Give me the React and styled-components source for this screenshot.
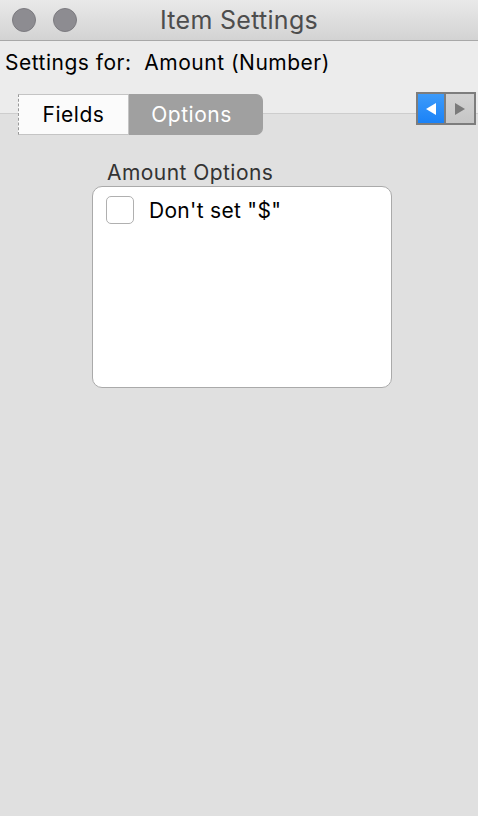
import React from "react";
import styled, { createGlobalStyle } from "styled-components";

const GlobalStyle = createGlobalStyle`
  html, body {
    margin: 0;
    padding: 0;
    background: #e0e0e0;
  }
  body {
    font-family: Inter, "Noto Sans", sans-serif;
  }
`;

const Window = styled.div`
  width: 478px;
  height: 816px;
  display: flex;
  flex-direction: column;
  background: #ececec;
  overflow: hidden;
`;

const TitleBar = styled.div`
  height: 40px;
  flex-shrink: 0;
  display: flex;
  align-items: center;
  position: relative;
  background: linear-gradient(#e9e9e9, #d3d3d3);
  border-bottom: 1px solid #a8a8a8;
`;

const Lights = styled.div`
  display: flex;
  gap: 17px;
  padding-left: 12px;
`;

const Light = styled.span`
  width: 22px;
  height: 22px;
  border-radius: 50%;
  background: #8d8c91;
  border: 1px solid #7c7b80;
`;

const Title = styled.div`
  position: absolute;
  left: 0;
  right: 0;
  text-align: center;
  font-size: 25px;
  letter-spacing: 0.3px;
  color: #4d4d4d;
  pointer-events: none;
`;

const InfoRow = styled.div`
  padding: 9px 0 0 5px;
  height: 51px;
  box-sizing: border-box;
  font-size: 21px;
  letter-spacing: 0.5px;
  color: #000;
  white-space: pre;
`;

const TabStrip = styled.div`
  height: 43px;
  display: flex;
  align-items: flex-start;
  background: linear-gradient(
    #ececec 0,
    #ececec 21px,
    #cdcdcd 21px,
    #cdcdcd 22px,
    #e0e0e0 22px
  );
`;

const Tabs = styled.div`
  display: flex;
  margin: 2px 0 0 18px;
  height: 41px;
`;

const Tab = styled.div`
  display: flex;
  align-items: center;
  justify-content: center;
  box-sizing: border-box;
  font-size: 21px;
  letter-spacing: 0.5px;
  width: ${(p) => p.$w}px;
  padding-right: ${(p) => (p.$active ? 8 : 0)}px;
  color: ${(p) => (p.$active ? "#fff" : "#000")};
  background: ${(p) => (p.$active ? "#a0a0a0" : "#fbfbfb")};
  border: 1px solid ${(p) => (p.$active ? "#a0a0a0" : "#c4c4c4")};
  border-left: ${(p) => (p.$active ? "none" : "1px dashed #999")};
  border-radius: ${(p) => (p.$active ? "0 7px 7px 0" : "0")};
`;

const Arrows = styled.div`
  display: flex;
  margin: 0 2px 0 auto;
`;

const ArrowButton = styled.div`
  width: 30px;
  height: 33px;
  box-sizing: border-box;
  display: flex;
  align-items: center;
  justify-content: center;
  border: 2px solid #7d7d7d;
  border-left-width: ${(p) => (p.$first ? 2 : 0)}px;
  background: ${(p) =>
    p.$on ? "linear-gradient(#3d9bfa, #1a82f7)" : "linear-gradient(#d2d2d2, #c6c6c6)"};
`;

const Panel = styled.div`
  flex: 1;
  background: #e0e0e0;
  display: flex;
  flex-direction: column;
  align-items: flex-start;
  padding: 24px 0 0 92px;
`;

const GroupLabel = styled.div`
  font-size: 21px;
  letter-spacing: 0.45px;
  color: #333;
  margin-left: 15px;
  height: 27px;
  line-height: 28px;
`;

const GroupBox = styled.div`
  width: 300px;
  height: 202px;
  box-sizing: border-box;
  background: #fff;
  border: 1px solid #aaaaaa;
  border-radius: 10px;
  padding: 9px 0 0 13px;
`;

const CheckRow = styled.label`
  display: flex;
  align-items: center;
  gap: 15px;
  font-size: 21px;
  letter-spacing: 0.3px;
  color: #000;
`;

const CheckBox = styled.span`
  width: 28px;
  height: 28px;
  box-sizing: border-box;
  border: 1px solid #b0b0b0;
  border-radius: 5px;
  background: #fff;
`;

const Triangle = ({ dir, color }) => (
  <svg width="12" height="14" viewBox="0 0 12 14">
    {dir === "left" ? (
      <polygon points="11,1 11,13 1,7" fill={color} />
    ) : (
      <polygon points="1,1 1,13 11,7" fill={color} />
    )}
  </svg>
);

export default function App() {
  return (
    <>
      <GlobalStyle />
      <Window>
        <TitleBar>
          <Lights>
            <Light />
            <Light />
          </Lights>
          <Title>Item Settings</Title>
        </TitleBar>
        <InfoRow>{"Settings for:  Amount (Number)"}</InfoRow>
        <TabStrip>
          <Tabs>
            <Tab $w={111}>Fields</Tab>
            <Tab $active $w={134}>
              Options
            </Tab>
          </Tabs>
          <Arrows>
            <ArrowButton $first $on>
              <Triangle dir="left" color="#fff" />
            </ArrowButton>
            <ArrowButton>
              <Triangle dir="right" color="#7a7a7a" />
            </ArrowButton>
          </Arrows>
        </TabStrip>
        <Panel>
          <GroupLabel>Amount Options</GroupLabel>
          <GroupBox>
            <CheckRow>
              <CheckBox />
              Don't set "$"
            </CheckRow>
          </GroupBox>
        </Panel>
      </Window>
    </>
  );
}
